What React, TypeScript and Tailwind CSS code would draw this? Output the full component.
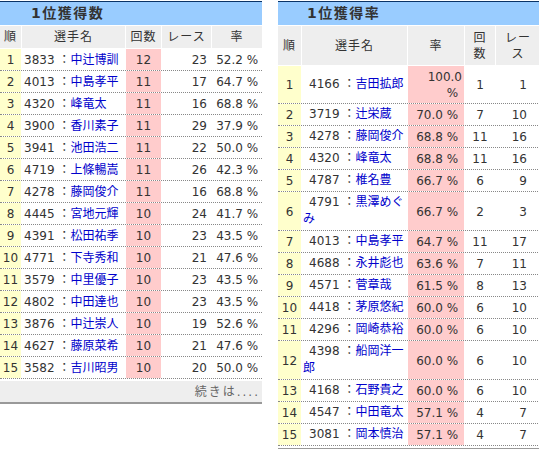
type CountRow = [number, string, string, number, number, string];
type RateRow = [number, string, string, string, number, number];

const countRows: CountRow[] = [
  [1, "3833", "中辻博訓", 12, 23, "52.2"],
  [2, "4013", "中島孝平", 11, 17, "64.7"],
  [3, "4320", "峰竜太", 11, 16, "68.8"],
  [4, "3900", "香川素子", 11, 29, "37.9"],
  [5, "3941", "池田浩二", 11, 22, "50.0"],
  [6, "4719", "上條暢嵩", 11, 26, "42.3"],
  [7, "4278", "藤岡俊介", 11, 16, "68.8"],
  [8, "4445", "宮地元輝", 10, 24, "41.7"],
  [9, "4391", "松田祐季", 10, 23, "43.5"],
  [10, "4771", "下寺秀和", 10, 21, "47.6"],
  [11, "3579", "中里優子", 10, 23, "43.5"],
  [12, "4802", "中田達也", 10, 23, "43.5"],
  [13, "3876", "中辻崇人", 10, 19, "52.6"],
  [14, "4627", "藤原菜希", 10, 21, "47.6"],
  [15, "3582", "吉川昭男", 10, 20, "50.0"],
];

const rateRows: RateRow[] = [
  [1, "4166", "吉田拡郎", "100.0", 1, 1],
  [2, "3719", "辻栄蔵", "70.0", 7, 10],
  [3, "4278", "藤岡俊介", "68.8", 11, 16],
  [4, "4320", "峰竜太", "68.8", 11, 16],
  [5, "4787", "椎名豊", "66.7", 6, 9],
  [6, "4791", "黒澤めぐみ", "66.7", 2, 3],
  [7, "4013", "中島孝平", "64.7", 11, 17],
  [8, "4688", "永井彪也", "63.6", 7, 11],
  [9, "4571", "菅章哉", "61.5", 8, 13],
  [10, "4418", "茅原悠紀", "60.0", 6, 10],
  [11, "4296", "岡崎恭裕", "60.0", 6, 10],
  [12, "4398", "船岡洋一郎", "60.0", 6, 10],
  [13, "4168", "石野貴之", "60.0", 6, 10],
  [14, "4547", "中田竜太", "57.1", 4, 7],
  [15, "3081", "岡本慎治", "57.1", 4, 7],
];

const cell = "flex items-center leading-[16px] pt-[3px] pb-[2px]";
const head = "flex items-center justify-center bg-[#eeeeee] leading-[16px] tracking-[1px] text-center";

const Title = ({ text, pad }: { text: string; pad: string }) => (
  <div
    className={`h-[24px] border-t border-[#0a3366] bg-[#99ccff] text-[14px] font-bold leading-[23px] tracking-[1.5px] text-[#333] ${pad}`}
  >
    {text}
  </div>
);

const Player = ({ id, name }: { id: string; name: string }) => (
  <>
    <span>{id} ：</span>
    <span className="text-[#0000cc]">{name}</span>
  </>
);

const CountTable = () => (
  <div className="w-[262px] shrink-0">
    <Title text="1位獲得数" pad="pl-[31px]" />
    <div className="mt-[1px] grid h-[22px] grid-cols-[21px_103px_35px_49px_50px] gap-x-px">
      <div className={head}>順</div>
      <div className={head}>選手名</div>
      <div className={head}>回数</div>
      <div className={head}>レース</div>
      <div className={head}>率</div>
    </div>
    <div className="mt-[1px]">
      {countRows.map(([rank, id, name, wins, races, rate]) => (
        <div
          key={rank}
          className="grid grid-cols-[21px_103px_35px_49px_50px] gap-x-px border-b border-dotted border-[#888]"
        >
          <div className={`${cell} justify-center bg-[#ffffcc]`}>{rank}</div>
          <div className={`${cell} pl-[2px] whitespace-nowrap`}>
            <Player id={id} name={name} />
          </div>
          <div className={`${cell} justify-center bg-[#ffcccc]`}>{wins}</div>
          <div className={`${cell} justify-end pr-[4px]`}>{races}</div>
          <div className={`${cell} justify-end`}>{rate} %{"\u00a0"}</div>
        </div>
      ))}
    </div>
    <div className="mt-[2px] flex h-[23px] items-center justify-end border-b-2 border-[#999] bg-[#eeeeee] pr-[2px] tracking-[2px] text-[#666]">
      続きは....
    </div>
  </div>
);

const RateTable = () => (
  <div className="w-[262px] shrink-0">
    <Title text="1位獲得率" pad="pl-[29px]" />
    <div className="mt-[1px] grid h-[39px] grid-cols-[23px_105px_56px_30px_44px] gap-x-px">
      <div className={head}>順</div>
      <div className={head}>選手名</div>
      <div className={head}>率</div>
      <div className={head}>
        回<br />数
      </div>
      <div className={head}>
        レー<br />ス
      </div>
    </div>
    <div className="mt-[1px]">
      {rateRows.map(([rank, id, name, rate, wins, races]) => (
        <div
          key={rank}
          className="grid grid-cols-[23px_105px_56px_30px_44px] gap-x-px border-b border-dotted border-[#888]"
        >
          <div className={`${cell} justify-center bg-[#ffffcc]`}>{rank}</div>
          <div className="self-center px-[1px] py-[2px] leading-[17px] indent-[6px]">
            <Player id={id} name={name} />
          </div>
          <div className={`${cell} justify-end bg-[#ffcccc] pl-[6px] pr-[2px]`}>
            <div className="text-right">
              {rate} %{"\u00a0"}
            </div>
          </div>
          <div className={`${cell} justify-center`}>{wins}</div>
          <div className={`${cell} justify-end pr-[13px]`}>{races}</div>
        </div>
      ))}
    </div>
    <div className="mt-[2px] h-[2px] bg-[#999]" />
  </div>
);

export default function App() {
  return (
    <div className="flex h-[449px] w-[539px] items-start gap-[16px] overflow-hidden bg-white pt-[1px] font-['DejaVu_Sans','Noto_Sans_CJK_JP',sans-serif] text-[12px] text-[#333]">
      <CountTable />
      <RateTable />
    </div>
  );
}
